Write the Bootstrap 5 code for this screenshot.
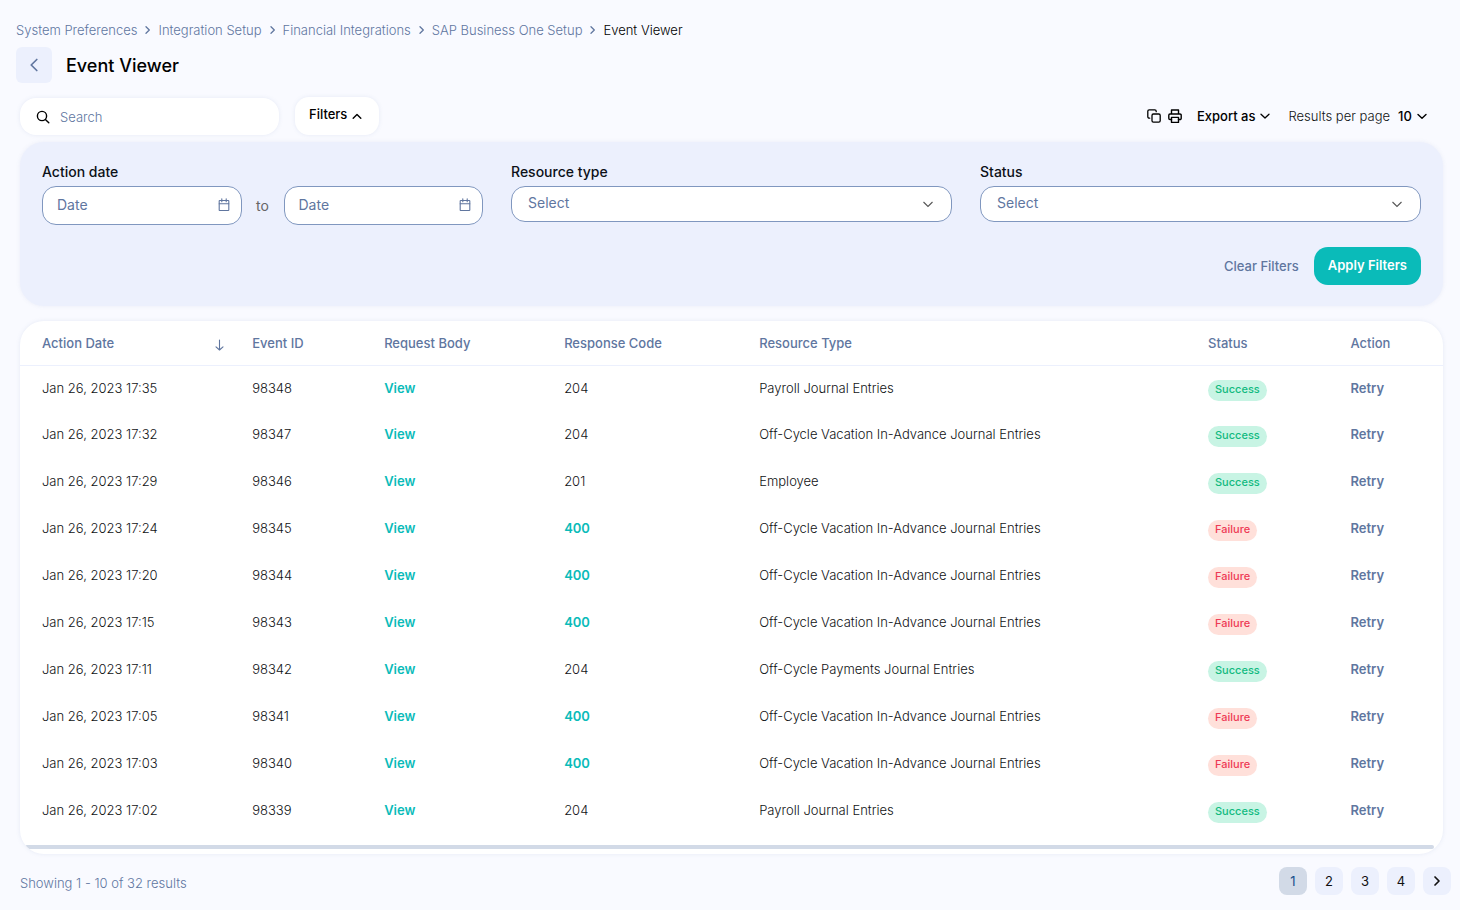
<!DOCTYPE html>
<html lang="en">
<head>
<meta charset="utf-8">
<meta name="viewport" content="width=device-width, initial-scale=1">
<title>Event Viewer</title>
<link href="https://cdn.jsdelivr.net/npm/bootstrap@5.3.0/dist/css/bootstrap.min.css" rel="stylesheet">
<style>
:root { --slate:#60769f; --ink:#101214; --teal:#0abbb9; --mist:#ecf0fd; --line:#8097bf; }
body { font-family:Inter,"Liberation Sans",sans-serif; font-size:13px; font-weight:300; line-height:20px; color:var(--ink); background:#f9faff; }
svg { display:block; flex:none; fill:none; stroke:currentColor; stroke-linecap:round; stroke-linejoin:round; }
.page { padding:20px 17px 0 16px; }
.crumbs { --bs-breadcrumb-margin-bottom:0; }
.crumbs a { color:var(--slate); text-decoration:none; }
.crumbs .breadcrumb-item { display:flex; align-items:center; padding:0; }
.crumbs .breadcrumb-item::before { display:none; }
.crumbs .breadcrumb-item svg { color:var(--slate); margin:0 7px; }
.crumbs .active { color:#000; }
.titlebar { gap:14px; margin-top:7px; }
.btn-back { width:36px; height:36px; padding:0; border:0; border-radius:6px; background:var(--mist); color:var(--slate); }
h1 { font-size:18px; line-height:24px; padding-top:1px; font-weight:500; color:#000; }
.toolbar { padding:14px 16px 0 4px; }
.soft { background:#fff; box-shadow:0 0 4px rgba(100,122,180,.13); }
.searchbox { width:259px; height:37px; border-radius:16px; padding:0 16px; gap:10px; margin-top:1px; }
.searchbox input { border:0; outline:0; background:none; width:100%; padding:0; font-size:13px; font-weight:300; color:var(--ink); }
input::placeholder { color:var(--slate) !important; opacity:1; }
.btn-filters { height:38px; border:0; border-radius:14px; padding:0 17px 2px 14px; gap:5px; font-size:13px; font-weight:500; color:#000; }
.plain { background:none; border:0; padding:0; color:#000; }
.tools .plain + .plain { margin-left:7px; }
.tools .export.plain { font-weight:500; gap:5px; margin-left:15px; margin-right:18px; }
.perpage { appearance:none; border:0; background:none; font-size:13px; font-weight:500; color:#000; padding:0; width:15px; height:20px; }
.filters { margin:7px 0 0 4px; padding:20px 22px 21px; border-radius:24px; background:var(--mist); box-shadow:0 0 4px rgba(100,122,180,.1); min-height:163px; }
.filters .form-label { display:block; font-size:14px; font-weight:500; line-height:20px; margin:0 0 4px; color:#0c1118; }
.fields { display:grid; grid-template-columns:repeat(3,minmax(0,1fr)); gap:0 28px; }
.datebox { height:39px; border:1px solid var(--line); border-radius:14px; background:#fff; padding:0 11px 2px 14px; flex:1 1 0; min-width:0; color:var(--slate); }
.datebox input { border:0; outline:0; padding:0; background:none; width:100%; min-width:0; font-size:14px; }
.to { font-size:14px; font-weight:400; color:#666; width:42px; text-align:center; }
.picker { height:36px; padding:0 40px 2px 16px; font-size:14px; line-height:20px; border:1px solid var(--line); border-radius:14px; color:var(--slate); background-color:#fff; background-position:right 17px center; background-size:12px 12px;
 background-image:url("data:image/svg+xml,%3Csvg xmlns='http://www.w3.org/2000/svg' viewBox='0 0 12 12'%3E%3Cpath d='M1.5 4 6 8.5 10.5 4' fill='none' stroke='%23555' stroke-width='1.1'/%3E%3C/svg%3E"); }
.form-actions { margin-top:22px; gap:15px; }
.btn-clear { font-size:13px; font-weight:500; color:var(--slate); }
.btn-apply { height:38px; border:0; border-radius:14px; padding:0 14px; font-size:13px; font-weight:600; color:#fff; background:var(--teal); }
.btn-apply:hover { background:#09a5a3; color:#fff; }
.sheet { margin:15px 0 0 4px; border-radius:24px; overflow:hidden; padding-bottom:5px; }
.events { table-layout:fixed; width:100%; min-width:1100px; }
.events th { color:var(--slate); font-weight:500; height:44px; padding:1px 0 0; border-bottom:1px solid var(--mist); }
.events td { height:47px; padding:12px 0 0; vertical-align:top; line-height:20px; }
.events th:first-child, .events td:first-child { padding-left:22px; }
.events a { color:var(--teal); font-weight:600; text-decoration:none; }
.events a.retry { color:var(--slate); }
.pill { display:block; width:max-content; height:21px; margin-top:2px; padding:0 7px; border-radius:11px; font-size:11px; font-weight:500; line-height:19px; }
.ok { background:#c8f4e4; color:#12ba80; }
.bad { background:#ffe0da; color:#ee3b55; }
.scrolltrack { height:4px; border-radius:2px; margin:10px 9px 0 5px; background:#d2dae7; }
.foot { margin:13px 0 0 4px; }
.foot p { color:var(--slate); padding-top:4px; }
.pager { margin-right:-8px; gap:8px; }
.pager .page-item .page-link { display:flex; align-items:center; justify-content:center; width:28px; height:28px; margin:0; padding:0; border:0; border-radius:8px; background:var(--mist); color:#111; font-size:13px; font-weight:400; line-height:20px; }
.pager .page-item.active .page-link { background:#d2dae7; color:#17508c; }
</style>
</head>
<body>
<div class="page">
<nav aria-label="Breadcrumb">
<ol class="breadcrumb crumbs">
<li class="breadcrumb-item"><a href="#">System Preferences</a></li>
<li class="breadcrumb-item"><svg width="7" height="10" viewBox="0 0 7 10" stroke-width="1.3"><path d="M2 1.8 5.3 5 2 8.2"/></svg><a href="#">Integration Setup</a></li>
<li class="breadcrumb-item"><svg width="7" height="10" viewBox="0 0 7 10" stroke-width="1.3"><path d="M2 1.8 5.3 5 2 8.2"/></svg><a href="#">Financial Integrations</a></li>
<li class="breadcrumb-item"><svg width="7" height="10" viewBox="0 0 7 10" stroke-width="1.3"><path d="M2 1.8 5.3 5 2 8.2"/></svg><a href="#">SAP Business One Setup</a></li>
<li class="breadcrumb-item active" aria-current="page"><svg width="7" height="10" viewBox="0 0 7 10" stroke-width="1.3"><path d="M2 1.8 5.3 5 2 8.2"/></svg>Event Viewer</li>
</ol>
</nav>
<header class="titlebar d-flex align-items-center">
<button type="button" class="btn btn-back d-flex align-items-center justify-content-center" aria-label="Back"><svg width="10" height="14" viewBox="0 0 10 14" stroke-width="1.7"><path d="M7.8 1.5 2.2 7l5.6 5.5"/></svg></button>
<h1 class="mb-0">Event Viewer</h1>
</header>
<div class="toolbar d-flex align-items-center">
<label class="searchbox soft d-flex align-items-center"><svg width="14" height="14" viewBox="0 0 14 14" stroke-width="1.4" color="#000"><circle cx="6" cy="6" r="4.6"/><path d="m9.4 9.4 3.4 3.4"/></svg><input type="search" placeholder="Search" aria-label="Search"></label>
<button type="button" class="btn btn-filters soft d-flex align-items-center ms-3">Filters<svg width="10" height="8" viewBox="0 0 10 8" stroke-width="1.4"><path d="M1.2 7.3 5 3.5l3.8 3.8"/></svg></button>
<div class="tools ms-auto d-flex align-items-center">
<button type="button" class="plain" aria-label="Copy"><svg width="14" height="14" viewBox="0 0 14 14" stroke-width="1.3"><rect x="5" y="5" width="8.2" height="8.2" rx="1.4"/><path d="M2.7 9.2h-.5A1.4 1.4 0 0 1 .8 7.8V2.2A1.4 1.4 0 0 1 2.2.8h5.6a1.4 1.4 0 0 1 1.4 1.4v.5"/></svg></button>
<button type="button" class="plain" aria-label="Print"><svg width="14" height="14" viewBox="0 0 14 14" stroke-width="1.4"><path d="M3.5 5V1h7v4M3.5 10.5H2A1.2 1.2 0 0 1 .8 9.3V6.2A1.2 1.2 0 0 1 2 5h10a1.2 1.2 0 0 1 1.2 1.2v3.1a1.2 1.2 0 0 1-1.2 1.2h-1.5"/><path d="M3.5 8.4h7v5h-7z"/></svg></button>
<button type="button" class="plain export d-flex align-items-center">Export as<svg width="10" height="8" viewBox="0 0 10 8" stroke-width="1.3"><path d="M1 2.2 5 6l4-3.8"/></svg></button>
<label for="perpage">Results per page</label>
<select id="perpage" class="perpage ms-2"><option>10</option></select>
<svg class="ms-1" width="10" height="8" viewBox="0 0 10 8" stroke-width="1.4" color="#000"><path d="M1 2.4 5 6.2l4-3.8"/></svg>
</div>
</div>
<form class="filters">
<div class="fields">
<div>
<label class="form-label" for="from">Action date</label>
<div class="d-flex align-items-center">
<div class="datebox d-flex align-items-center"><input id="from" type="text" placeholder="Date"><svg width="12" height="14" viewBox="0 0 12 14" stroke-width="1.1"><rect x="1.2" y="2.5" width="9.6" height="10" rx=".6"/><path d="M1.2 5.8h9.6M3.8.8v2.9M8.2.8v2.9"/></svg></div>
<span class="to">to</span>
<div class="datebox d-flex align-items-center"><input type="text" placeholder="Date" aria-label="Action date, end"><svg width="12" height="14" viewBox="0 0 12 14" stroke-width="1.1"><rect x="1.2" y="2.5" width="9.6" height="10" rx=".6"/><path d="M1.2 5.8h9.6M3.8.8v2.9M8.2.8v2.9"/></svg></div>
</div>
</div>
<div><label class="form-label" for="resource">Resource type</label><select id="resource" class="form-select picker"><option>Select</option></select></div>
<div><label class="form-label" for="status">Status</label><select id="status" class="form-select picker"><option>Select</option></select></div>
</div>
<div class="form-actions d-flex justify-content-end align-items-center">
<button type="reset" class="plain btn-clear">Clear Filters</button>
<button type="button" class="btn btn-apply">Apply Filters</button>
</div>
</form>
<section class="sheet soft">
<table class="events">
<colgroup><col style="width:16.32%"><col style="width:9.27%"><col style="width:12.65%"><col style="width:13.71%"><col style="width:31.54%"><col style="width:10.01%"><col></colgroup>
<thead><tr>
<th scope="col"><div class="d-flex align-items-center justify-content-between">Action Date<svg class="me-4 mt-1" width="17" height="12" viewBox="0 0 17 12" stroke-width="1.1"><path d="M8.5 1v10M5 7.8 8.5 11 12 7.8"/></svg></div></th>
<th scope="col">Event ID</th><th scope="col">Request Body</th><th scope="col">Response Code</th><th scope="col">Resource Type</th><th scope="col">Status</th><th scope="col">Action</th>
</tr></thead>
<tbody>
<tr><td>Jan 26, 2023 17:35</td><td>98348</td><td><a href="#">View</a></td><td>204</td><td>Payroll Journal Entries</td><td><span class="pill ok">Success</span></td><td><a class="retry" href="#">Retry</a></td></tr>
<tr><td>Jan 26, 2023 17:32</td><td>98347</td><td><a href="#">View</a></td><td>204</td><td>Off-Cycle Vacation In-Advance Journal Entries</td><td><span class="pill ok">Success</span></td><td><a class="retry" href="#">Retry</a></td></tr>
<tr><td>Jan 26, 2023 17:29</td><td>98346</td><td><a href="#">View</a></td><td>201</td><td>Employee</td><td><span class="pill ok">Success</span></td><td><a class="retry" href="#">Retry</a></td></tr>
<tr><td>Jan 26, 2023 17:24</td><td>98345</td><td><a href="#">View</a></td><td><a href="#">400</a></td><td>Off-Cycle Vacation In-Advance Journal Entries</td><td><span class="pill bad">Failure</span></td><td><a class="retry" href="#">Retry</a></td></tr>
<tr><td>Jan 26, 2023 17:20</td><td>98344</td><td><a href="#">View</a></td><td><a href="#">400</a></td><td>Off-Cycle Vacation In-Advance Journal Entries</td><td><span class="pill bad">Failure</span></td><td><a class="retry" href="#">Retry</a></td></tr>
<tr><td>Jan 26, 2023 17:15</td><td>98343</td><td><a href="#">View</a></td><td><a href="#">400</a></td><td>Off-Cycle Vacation In-Advance Journal Entries</td><td><span class="pill bad">Failure</span></td><td><a class="retry" href="#">Retry</a></td></tr>
<tr><td>Jan 26, 2023 17:11</td><td>98342</td><td><a href="#">View</a></td><td>204</td><td>Off-Cycle Payments Journal Entries</td><td><span class="pill ok">Success</span></td><td><a class="retry" href="#">Retry</a></td></tr>
<tr><td>Jan 26, 2023 17:05</td><td>98341</td><td><a href="#">View</a></td><td><a href="#">400</a></td><td>Off-Cycle Vacation In-Advance Journal Entries</td><td><span class="pill bad">Failure</span></td><td><a class="retry" href="#">Retry</a></td></tr>
<tr><td>Jan 26, 2023 17:03</td><td>98340</td><td><a href="#">View</a></td><td><a href="#">400</a></td><td>Off-Cycle Vacation In-Advance Journal Entries</td><td><span class="pill bad">Failure</span></td><td><a class="retry" href="#">Retry</a></td></tr>
<tr><td>Jan 26, 2023 17:02</td><td>98339</td><td><a href="#">View</a></td><td>204</td><td>Payroll Journal Entries</td><td><span class="pill ok">Success</span></td><td><a class="retry" href="#">Retry</a></td></tr>
</tbody>
</table>
<div class="scrolltrack"></div>
</section>
<footer class="foot d-flex justify-content-between align-items-center">
<p class="mb-0">Showing 1 - 10 of 32 results</p>
<nav aria-label="Pages">
<ul class="pagination pager mb-0">
<li class="page-item active" aria-current="page"><a class="page-link" href="#">1</a></li>
<li class="page-item"><a class="page-link" href="#">2</a></li>
<li class="page-item"><a class="page-link" href="#">3</a></li>
<li class="page-item"><a class="page-link" href="#">4</a></li>
<li class="page-item"><a class="page-link" href="#" aria-label="Next"><svg width="8" height="12" viewBox="0 0 8 12" stroke-width="1.7"><path d="M2 2l4 4-4 4"/></svg></a></li>
</ul>
</nav>
</footer>
</div>
<script src="https://cdn.jsdelivr.net/npm/bootstrap@5.3.0/dist/js/bootstrap.bundle.min.js"></script>
</body>
</html>
